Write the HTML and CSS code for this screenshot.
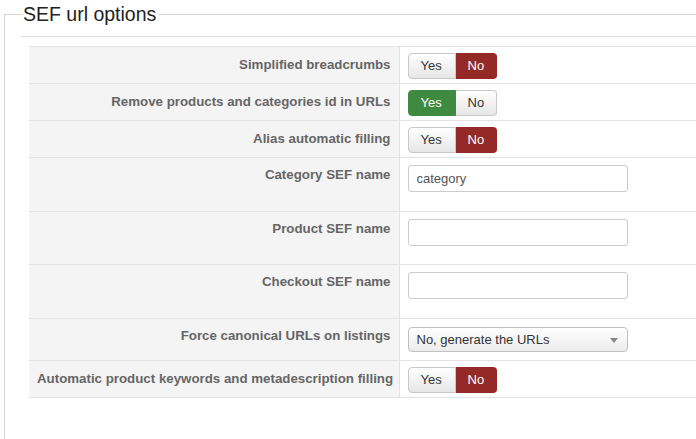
FILE: index.html
```html
<!DOCTYPE html>
<html lang="en">
<head>
    <meta charset="UTF-8">
    <title>SEF url options</title>
    <link rel="stylesheet" href="styles.css">
</head>
<body>
    <fieldset class="adminform">
        <legend>SEF url options</legend>
        <div class="form-rule"></div>
        <table class="admintable">
            <tr class="row-btn">
                <td class="key">Simplified breadcrumbs</td>
                <td>
                    <div class="btn-group">
                        <span class="btn">Yes</span><span class="btn btn-no active">No</span>
                    </div>
                </td>
            </tr>
            <tr class="row-btn">
                <td class="key">Remove products and categories id in URLs</td>
                <td>
                    <div class="btn-group">
                        <span class="btn btn-yes active">Yes</span><span class="btn">No</span>
                    </div>
                </td>
            </tr>
            <tr class="row-btn">
                <td class="key">Alias automatic filling</td>
                <td>
                    <div class="btn-group">
                        <span class="btn">Yes</span><span class="btn btn-no active">No</span>
                    </div>
                </td>
            </tr>
            <tr class="row-input">
                <td class="key">Category SEF name</td>
                <td><input type="text" value="category"></td>
            </tr>
            <tr class="row-input">
                <td class="key">Product SEF name</td>
                <td><input type="text" value=""></td>
            </tr>
            <tr class="row-input">
                <td class="key">Checkout SEF name</td>
                <td><input type="text" value=""></td>
            </tr>
            <tr class="row-select">
                <td class="key">Force canonical URLs on listings</td>
                <td>
                    <div class="select">No, generate the URLs<span class="caret"></span></div>
                </td>
            </tr>
            <tr class="row-btn">
                <td class="key">Automatic product keywords and metadescription filling</td>
                <td>
                    <div class="btn-group">
                        <span class="btn">Yes</span><span class="btn btn-no active">No</span>
                    </div>
                </td>
            </tr>
        </table>
    </fieldset>
</body>
</html>
```

FILE: styles.css
```css
body {
    margin: 0;
    padding: 0;
    overflow: hidden;
    font-family: "Liberation Sans", Arial, sans-serif;
    font-size: 13px;
    color: #333;
    background: #fff;
}

.adminform {
    margin: 4px 0 0 4px;
    padding: 0 0 0 16px;
    border: 1px solid #d4d4d4;
    border-right: 0;
    border-bottom: 0;
    height: 440px;
}

.adminform legend {
    margin-left: 2px;
    padding: 0 3px 0 0;
    font-size: 19.5px;
    line-height: 20px;
    color: #222;
}

.form-rule {
    border-top: 1px solid #ddd;
    margin-top: 12px;
}

.admintable {
    border-collapse: collapse;
    table-layout: fixed;
    margin: 9px 0 0 8px;
    width: 700px;
}

.admintable td {
    box-sizing: border-box;
    border-top: 1px solid #e3e3e3;
    border-bottom: 1px solid #e3e3e3;
    vertical-align: top;
    padding: 0 8px;
    text-align: left;
}

.admintable td.key {
    width: 370px;
    background: #f4f4f4;
    border-right: 1px solid #e3e3e3;
    text-align: right;
    white-space: nowrap;
    font-size: 13.3px;
    font-weight: bold;
    color: #666;
    line-height: 18px;
    padding-top: 8px;
}

.row-btn td {
    height: 37px;
    padding-top: 6px;
}

.row-btn td.key {
    padding-top: 9px;
}

.row-input td {
    height: 53.5px;
    padding-top: 7px;
}

.row-input td.key {
    padding-top: 8px;
}

.row-select td {
    height: 42px;
    padding-top: 8px;
}

.row-select td.key {
    padding-top: 8px;
}

.btn-group {
    display: inline-flex;
}

.btn {
    display: inline-block;
    height: 26px;
    line-height: 24px;
    box-sizing: border-box;
    padding: 0 12px;
    font-size: 13px;
    color: #333;
    border: 1px solid #c8c8c8;
    background: linear-gradient(#ffffff, #e6e6e6);
}

.btn:first-child {
    border-radius: 4px 0 0 4px;
    width: 48px;
}

.btn:last-child {
    border-radius: 0 4px 4px 0;
    border-left: 0;
    width: 41px;
}

.btn.active {
    color: #fff;
    background: #942a25;
    border-color: #942a25;
}

.btn.btn-yes.active {
    background: #3e8a3e;
    border-color: #3e8a3e;
}

.admintable input {
    width: 220px;
    height: 27px;
    box-sizing: border-box;
    border: 1px solid #cccccc;
    border-radius: 3px;
    padding: 0 8px;
    font-family: "Liberation Sans", Arial, sans-serif;
    font-size: 13px;
    color: #555;
    margin: 0;
}

.select {
    position: relative;
    width: 220px;
    height: 25px;
    line-height: 23px;
    box-sizing: border-box;
    border: 1px solid #c0c0c0;
    border-radius: 4px;
    padding: 0 8px;
    color: #333;
    background: linear-gradient(#ffffff, #ececec);
}

.caret {
    position: absolute;
    right: 9px;
    top: 10px;
    border-left: 4px solid transparent;
    border-right: 4px solid transparent;
    border-top: 5px solid #888;
}
```
